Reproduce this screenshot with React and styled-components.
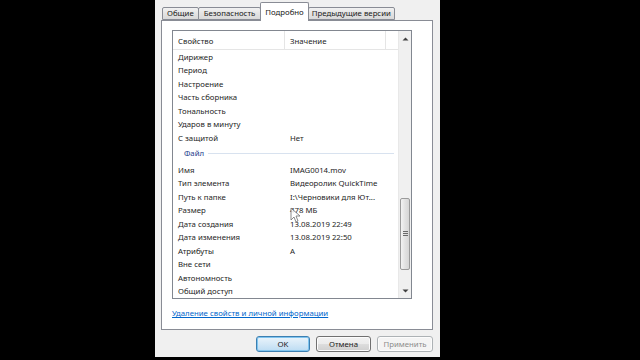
import React from "react";
import styled, { createGlobalStyle } from "styled-components";

const GlobalStyle = createGlobalStyle`
  html, body {
    margin: 0;
    padding: 0;
    background: #000;
  }
  body {
    font-family: "Noto Sans", "Open Sans", "Liberation Sans", sans-serif;
    -webkit-font-smoothing: antialiased;
  }
`;

const Screen = styled.div`
  width: 640px;
  height: 360px;
  background: #000;
  display: flex;
  padding-left: 155px;
  box-sizing: border-box;
  position: relative;
  overflow: hidden;
`;

const Dialog = styled.div`
  width: 285px;
  height: 357px;
  background: #f0f0f0;
  display: flex;
  flex-direction: column;
  box-sizing: border-box;
`;

const TabStrip = styled.div`
  display: flex;
  align-items: flex-end;
  height: 20px;
  padding-left: 7px;
  box-sizing: border-box;
`;

const Tab = styled.div`
  position: relative;
  height: ${(p) => (p.active ? "19px" : "13px")};
  margin-bottom: ${(p) => (p.active ? "-1px" : "0")};
  margin-left: ${(p) => (p.first ? "0" : "-1px")};
  padding: 0 ${(p) => p.pad || 4}px;
  border: 1px solid #898c95;
  border-bottom: ${(p) => (p.active ? "none" : "1px solid #898c95")};
  border-radius: 2px 2px 0 0;
  background: ${(p) =>
    p.active ? "#fff" : "linear-gradient(#f2f2f2, #e3e3e3 50%, #d9d9d9)"};
  z-index: ${(p) => (p.active ? 2 : 1)};
  font-size: 7.8px;
  line-height: ${(p) => (p.active ? "14px" : "13px")};
  color: #1a1a1a;
  white-space: nowrap;
  box-sizing: border-box;
  display: flex;
  align-items: ${(p) => (p.active ? "flex-start" : "center")};
  padding-top: ${(p) => (p.active ? "2px" : "0")};
`;

const Panel = styled.div`
  margin: 0 7px 0 6px;
  height: 310px;
  border: 1px solid #898c95;
  background: #fff;
  box-sizing: border-box;
  padding: 9px 0 0 10px;
  display: flex;
  flex-direction: column;
`;

const ListBox = styled.div`
  width: 240px;
  height: 269px;
  border: 1px solid #828790;
  box-sizing: border-box;
  display: flex;
  overflow: hidden;
`;

const ListMain = styled.div`
  flex: 1;
  display: flex;
  flex-direction: column;
  overflow: hidden;
`;

const Header = styled.div`
  height: 19px;
  flex-shrink: 0;
  display: flex;
  align-items: stretch;
  border-bottom: 1px solid #e5e5e5;
  box-sizing: border-box;
  background: #fff;
`;

const HeaderCell = styled.div`
  width: ${(p) => p.w}px;
  flex: ${(p) => (p.w ? "none" : 1)};
  padding-left: 5px;
  box-sizing: border-box;
  font-size: 7.8px;
  color: #1e1e1e;
  display: flex;
  align-items: center;
  padding-top: 2px;
  border-right: ${(p) => (p.line ? "1px solid #e5e5e5" : "none")};
`;

const Row = styled.div`
  height: 13.5px;
  flex-shrink: 0;
  display: flex;
  align-items: center;
  font-size: 7.8px;
  color: #1e1e1e;
  white-space: nowrap;
`;

const NameCell = styled.div`
  width: 112px;
  padding-left: 5px;
  box-sizing: border-box;
  overflow: hidden;
`;

const ValueCell = styled.div`
  flex: 1;
  padding-left: 5px;
  overflow: hidden;
`;

const GroupRow = styled.div`
  height: 18.5px;
  flex-shrink: 0;
  display: flex;
  align-items: center;
  padding: 0 4px 1px 11px;
  gap: 4px;
  font-size: 7.8px;
  color: #1e3c8c;
  box-sizing: border-box;
`;

const GroupLine = styled.div`
  flex: 1;
  height: 1px;
  background: #d8e2ef;
  margin-top: 1px;
`;

const ScrollBar = styled.div`
  width: 13px;
  flex-shrink: 0;
  display: flex;
  flex-direction: column;
  background: #f0f0f0;
  border-left: 1px solid #e8e8e8;
  box-sizing: border-box;
`;

const ScrollArrow = styled.div`
  height: 15px;
  display: flex;
  align-items: center;
  justify-content: center;
`;

const Track = styled.div`
  flex: 1;
  display: flex;
  flex-direction: column;
  padding-top: 152px;
  padding-bottom: 13px;
`;

const Thumb = styled.div`
  height: 72px;
  margin: 0 1px;
  border: 1px solid #9a9a9a;
  border-radius: 2px;
  background: linear-gradient(90deg, #f3f3f3, #e2e2e2 50%, #d6d6d6);
  display: flex;
  align-items: center;
  justify-content: center;
  box-sizing: border-box;
`;

const LinkRow = styled.div`
  padding-top: 9px;
  font-size: 7.8px;
`;

const Link = styled.a`
  color: #0066cc;
  text-decoration: underline;
`;

const ButtonRow = styled.div`
  display: flex;
  justify-content: flex-end;
  gap: 6px;
  padding: 6px 7px 0 0;
`;

const Button = styled.div`
  width: ${(p) => p.w}px;
  height: 16px;
  box-sizing: border-box;
  border: 1px solid ${(p) => (p.primary ? "#3c7fb1" : p.disabled ? "#adb2b5" : "#707070")};
  border-radius: 3px;
  background: ${(p) =>
    p.primary
      ? "linear-gradient(#eaf4fb, #d4e8f7 50%, #bcdcf3)"
      : p.disabled
      ? "#f4f4f4"
      : "linear-gradient(#f2f2f2, #ebebeb 50%, #dddddd 51%, #cfcfcf)"};
  box-shadow: ${(p) => (p.primary ? "inset 0 0 0 1px #7fc4ef" : "inset 0 0 0 1px #fcfcfc")};
  font-size: 7.8px;
  color: ${(p) => (p.disabled ? "#8c8c8c" : "#1a1a1a")};
  display: flex;
  align-items: center;
  justify-content: center;
`;

const Cursor = styled.svg`
  position: absolute;
  left: 290px;
  top: 207px;
  opacity: 0.85;
`;

const topRows = [
  ["Дирижер", ""],
  ["Период", ""],
  ["Настроение", ""],
  ["Часть сборника", ""],
  ["Тональность", ""],
  ["Ударов в минуту", ""],
  ["С защитой", "Нет"],
];

const fileRows = [
  ["Имя", "IMAG0014.mov"],
  ["Тип элемента", "Видеоролик QuickTime"],
  ["Путь к папке", "I:\\Черновики для Ют..."],
  ["Размер", "478 МБ"],
  ["Дата создания", "13.08.2019 22:49"],
  ["Дата изменения", "13.08.2019 22:50"],
  ["Атрибуты", "A"],
  ["Вне сети", ""],
  ["Автономность", ""],
  ["Общий доступ", ""],
];

const UpArrow = () => (
  <svg width="7" height="4" viewBox="0 0 7 4">
    <path d="M0.5 3.5 L3.5 0.5 L6.5 3.5 Z" fill="#404040" />
  </svg>
);

const DownArrow = () => (
  <svg width="7" height="4" viewBox="0 0 7 4">
    <path d="M0.5 0.5 L3.5 3.5 L6.5 0.5 Z" fill="#404040" />
  </svg>
);

const Grip = () => (
  <svg width="5" height="6" viewBox="0 0 5 6">
    <path d="M0 0.5 H5 M0 2.5 H5 M0 4.5 H5" stroke="#6a6a6a" strokeWidth="1" />
  </svg>
);

export default function App() {
  return (
    <Screen>
      <GlobalStyle />
      <Dialog>
        <TabStrip>
          <Tab first>Общие</Tab>
          <Tab pad={5}>Безопасность</Tab>
          <Tab active pad={4}>Подробно</Tab>
          <Tab pad={3}>Предыдущие версии</Tab>
        </TabStrip>
        <Panel>
          <ListBox>
            <ListMain>
              <Header>
                <HeaderCell w={112} line>Свойство</HeaderCell>
                <HeaderCell w={101} line>Значение</HeaderCell>
                <HeaderCell />
              </Header>
              {topRows.map(([n, v]) => (
                <Row key={n}>
                  <NameCell>{n}</NameCell>
                  <ValueCell>{v}</ValueCell>
                </Row>
              ))}
              <GroupRow>
                Файл
                <GroupLine />
              </GroupRow>
              {fileRows.map(([n, v]) => (
                <Row key={n}>
                  <NameCell>{n}</NameCell>
                  <ValueCell>{v}</ValueCell>
                </Row>
              ))}
            </ListMain>
            <ScrollBar>
              <ScrollArrow>
                <UpArrow />
              </ScrollArrow>
              <Track>
                <Thumb>
                  <Grip />
                </Thumb>
              </Track>
              <ScrollArrow>
                <DownArrow />
              </ScrollArrow>
            </ScrollBar>
          </ListBox>
          <LinkRow>
            <Link>Удаление свойств и личной информации</Link>
          </LinkRow>
        </Panel>
        <ButtonRow>
          <Button w={54} primary>OK</Button>
          <Button w={55}>Отмена</Button>
          <Button w={56} disabled>Применить</Button>
        </ButtonRow>
      </Dialog>
      <Cursor width="11" height="16" viewBox="0 0 11 16">
        <path
          d="M1 1 L1 13 L4 10 L6 15 L8 14 L6 9 L10 9 Z"
          fill="#fff"
          stroke="#555"
          strokeWidth="0.8"
          strokeLinejoin="round"
        />
      </Cursor>
    </Screen>
  );
}
